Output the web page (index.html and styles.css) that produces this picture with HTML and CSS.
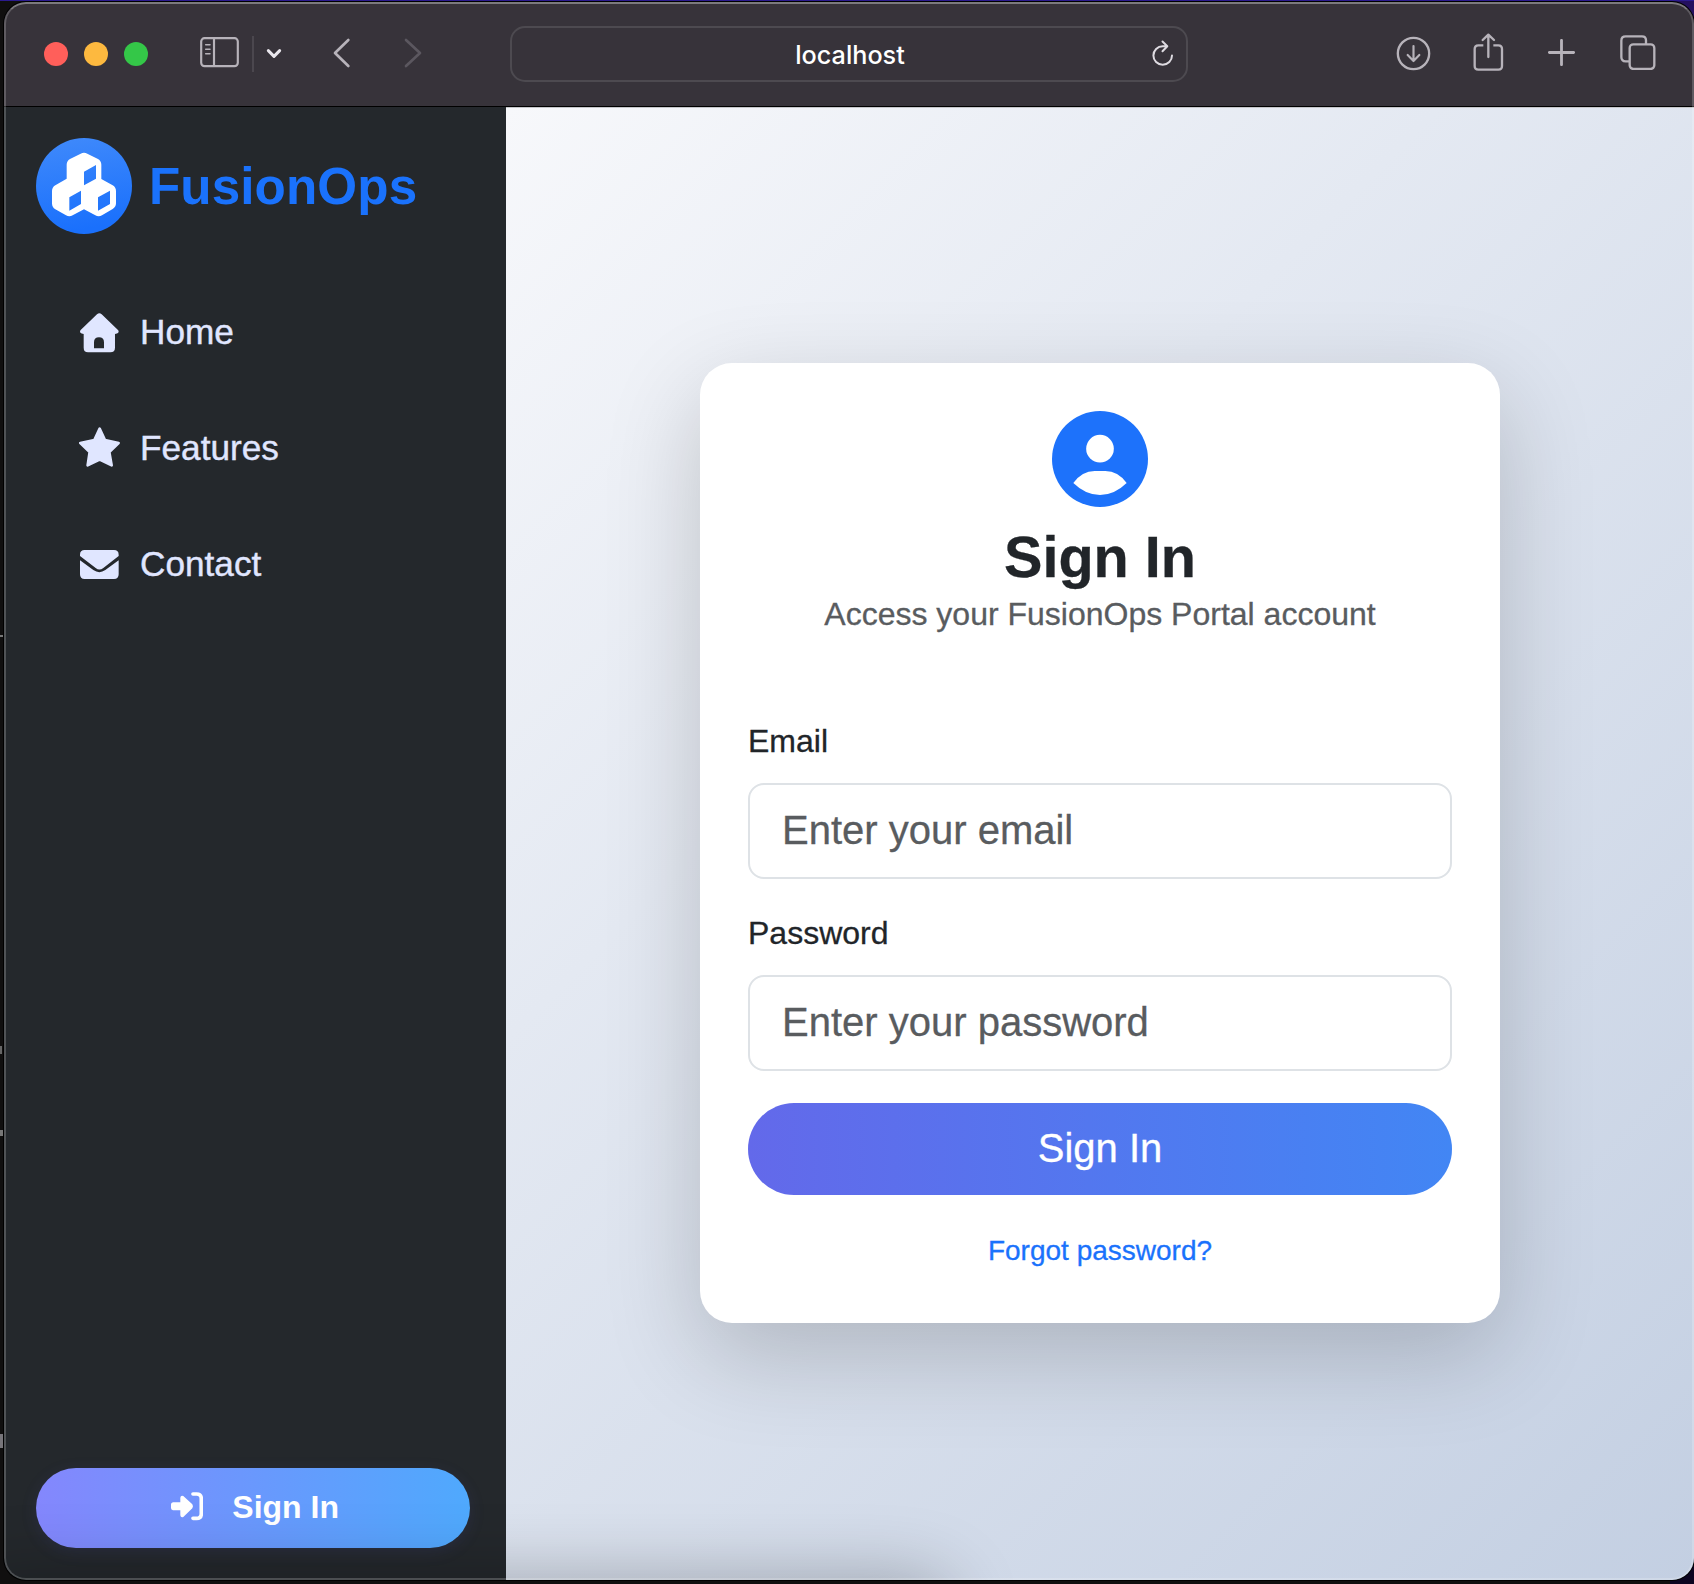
FILE: index.html
```html
<!DOCTYPE html>
<html lang="en">
<head>
<meta charset="utf-8">
<title>FusionOps Portal</title>
<link rel="stylesheet" href="styles.css">
</head>
<body>
<div class="window">
  <header class="toolbar">
    <div class="lights"><i class="light red"></i><i class="light yellow"></i><i class="light green"></i></div>
    <svg class="tb-sidebar" viewBox="600 113 117 91" width="39" height="30.3" fill="none" stroke="#b7b3ba" stroke-width="6.5"><rect x="603.5" y="116.5" width="110" height="84" rx="10"/><path d="M642 116V201"/><path stroke-width="4.5" stroke-linecap="round" d="M617 136H630M617 150H630M617 163H630"/></svg>
    <span class="tb-sep"></span>
    <svg class="tb-chev" viewBox="798 144 48 33" width="16" height="11" fill="none" stroke="#e9e6ec" stroke-width="9" stroke-linecap="round" stroke-linejoin="round"><path d="M805 152L822 169L839 152"/></svg>
    <svg class="tb-back" viewBox="998 114 54 90" width="18" height="30" fill="none" stroke="#b7b3ba" stroke-width="8" stroke-linecap="round" stroke-linejoin="round"><path d="M1044 120L1004 159L1044 198"/></svg>
    <svg class="tb-fwd" viewBox="1212 114 54 90" width="18" height="30" fill="none" stroke="#5b575f" stroke-width="8" stroke-linecap="round" stroke-linejoin="round"><path d="M1218 120L1260 159L1218 198"/></svg>
    <div class="address"><span>localhost</span>
      <svg class="reload" viewBox="0 0 24 28" width="24" height="28" fill="none" stroke="#dedbe1" stroke-width="2" stroke-linecap="round" stroke-linejoin="round"><path d="M21 15.5A9.3 9.3 0 1 1 11.7 6.2H16M11.5 1.5L16.3 6.2L11.5 11.2"/></svg>
    </div>
    <div class="tb-actions">
      <svg viewBox="139 107 105 105" width="35" height="35" fill="none" stroke="#b7b3ba" stroke-width="7" stroke-linecap="round" stroke-linejoin="round"><circle cx="191.500" cy="159.500" r="47"/><path stroke-width="6.5" d="M191.500 137V181M174 164L191.500 182L209 164"/></svg>
      <svg class="tb-share" viewBox="370 97 93 114" width="31" height="38" fill="none" stroke="#b7b3ba" stroke-width="7" stroke-linecap="round" stroke-linejoin="round"><path stroke-linecap="butt" d="M401 134H386Q375 134 375 145V196Q375 207 386 207H446Q457 207 457 196V145Q457 134 446 134H431"/><path d="M416 169V102M399 118L416 102L433 118"/></svg>
      <svg class="tb-plus" viewBox="594 117 81 81" width="27" height="27" fill="none" stroke="#b7b3ba" stroke-width="8.5" stroke-linecap="round"><path d="M634.500 121V194M598 157.500H671"/></svg>
      <svg class="tb-tabs" viewBox="809 105 108 106" width="36" height="35.300" fill="none" stroke="#b7b3ba" stroke-width="7"><rect x="838" y="133" width="74" height="74" rx="11"/><path d="M838 184H826Q813 184 813 171V122Q813 109 826 109H875Q887 109 887 121V132"/></svg>
    </div>
  </header>
  <div class="page">
    <aside class="sidebar">
      <div class="brand">
        <svg viewBox="18 24 288 288" width="96" height="96"><defs><linearGradient id="brand" x1="0" y1="0" x2="0.150" y2="1"><stop offset="0" stop-color="#408afb"/><stop offset="1" stop-color="#1a70fc"/></linearGradient></defs><circle cx="162" cy="168" r="144" fill="url(#brand)"/><path fill="#fff" fill-rule="evenodd" d="M152 71Q162 66 172 71L204 87Q214 93 214 104V147L248 166Q258 172 258 183V220Q258 231 248 237L216 256Q206 262 196 256L162 238L128 256Q118 262 108 256L76 238Q66 232 66 220V183Q66 172 76 166L110 146V104Q110 93 120 87ZM162 125V166L198 146V105ZM118 202V242L153 222V182ZM204 202V242L240 222V182Z"/></svg>
        <span>FusionOps</span>
      </div>
      <nav class="nav">
        <a><svg class="house" viewBox="150 68 117 118" width="39" height="39.300" fill="#e0e6ff"><path fill-rule="evenodd" d="M201 72Q208 66 215 72L264 119Q268 124 264 128Q262 130 255 131V172Q255 186 241 186H174Q161 186 161 172V131Q154 130 152 128Q148 124 152 119ZM192 174H222V156Q222 141 207 141Q192 141 192 156Z"/></svg>Home</a>
        <a><svg class="star" viewBox="147 410 124 120" width="41.300" height="40" fill="#e0e6ff" stroke="#e0e6ff" stroke-width="8" stroke-linejoin="round"><path d="M209 415L225 449L266 458L238 485L245 525L209 508L173 525L179 485L151 458L193 449Z"/></svg>Features</a>
        <a><svg viewBox="150 780 117 87" width="39" height="29" fill="#e0e6ff"><path d="M150 798V794Q150 780 164 780H252Q266 780 266 794V798L220 834Q208 843 197 834ZM150 811L190 840Q208 853 226 840L266 811V853Q266 867 252 867H164Q150 867 150 853Z"/></svg>Contact</a>
      </nav>
      <button class="side-signin"><svg viewBox="513 215 97 86" width="32.300" height="28.700"><path fill="#fff" d="M519 246H541V232Q542 224 550 227L577 252Q581 258 577 264L550 290Q542 293 541 285V270H519Q513 269 513 263V252Q513 247 519 246Z"/><path fill="none" stroke="#fff" stroke-width="11" stroke-linecap="round" d="M579 221H590Q604 221 604 235V280Q604 294 590 294H579"/></svg>Sign In</button>
    </aside>
    <main class="main">
      <form class="card">
        <svg class="avatar" viewBox="216 93 288 288" width="96" height="96"><circle cx="360" cy="237" r="144" fill="#1d72fb"/><circle cx="360" cy="206" r="41.500" fill="#fff"/><path fill="#fff" d="M280 309Q306 273 344 273H376Q414 273 440 309Q403 345 360 345Q317 345 280 309Z"/></svg>
        <h1>Sign In</h1>
        <p class="subtitle">Access your FusionOps Portal account</p>
        <label for="email">Email</label>
        <input id="email" type="email" placeholder="Enter your email">
        <label for="password">Password</label>
        <input id="password" type="password" placeholder="Enter your password">
        <button type="button" class="submit">Sign In</button>
        <a class="forgot">Forgot password?</a>
      </form>
    </main>
  </div>
</div>
</body>
</html>
```
FILE: styles.css
```css
* { box-sizing: border-box; }
html, body { height: 100%; }
body {
  margin: 0;
  padding: 2px 0 4px 4px;
  overflow: hidden;
  font-family: Arial, "Liberation Sans", sans-serif;
  background:
    linear-gradient(#2b1b8e, #2b1b8e) 0 0 / 100% 1px no-repeat,
    linear-gradient(#77757a, #77757a) 0 1434px / 3px 14px no-repeat,
    linear-gradient(#666, #666) 0 1046px / 2px 8px no-repeat,
    linear-gradient(#777, #777) 0 1130px / 3px 6px no-repeat,
    linear-gradient(#777, #777) 0 635px / 3px 2px no-repeat,
    linear-gradient(#24105f, #24105f) 100% 0 / 24px 24px no-repeat,
    linear-gradient(#0c0420, #0c0420) 100% 100% / 24px 24px no-repeat,
    #100f0f;
}
svg { display: block; flex: none; }
.window {
  position: relative;
  height: 1578px;
  border-radius: 22px;
  overflow: hidden;
  background: #24282c;
  box-shadow: 0 0 0 1px #000;
  display: flex;
  flex-direction: column;
}
.window::after {
  content: "";
  position: absolute;
  inset: 0;
  border: 2px solid rgba(255, 255, 255, .2);
  border-top-color: rgba(255, 255, 255, .35);
  border-radius: 22px;
  pointer-events: none;
}
.toolbar {
  flex: none;
  height: 105px;
  padding: 0 38px 0 40px;
  display: flex;
  align-items: center;
  background: #37333a;
  border-bottom: 1px solid #000;
}
.toolbar > * { margin-top: -1px; }
.lights { display: flex; gap: 16px; }
.light { width: 24px; height: 24px; border-radius: 50%; }
.red { background: #ff5f5a; }
.yellow { background: #fdb93f; }
.green { background: #34c748; }
.toolbar > .tb-sidebar, .toolbar > .tb-back, .toolbar > .tb-fwd { margin-top: -3px; }
.tb-sidebar { margin-left: 52px; }
.tb-sep { width: 2px; height: 36px; margin-left: 13px; background: #4b474e; }
.tb-chev { margin-left: 12px; }
.tb-back { margin-left: 51px; }
.tb-fwd { margin-left: 53px; }
.address {
  position: relative;
  width: 678px;
  height: 56px;
  margin-left: 88px;
  padding: 3px 0 0 2px;
  border: 2px solid #4d4a50;
  border-radius: 15px;
  display: flex;
  align-items: center;
  justify-content: center;
  font: 500 25.2px Inter, sans-serif;
  color: #fff;
}
.reload { position: absolute; right: 11px; top: 12px; }
.tb-actions { display: flex; align-items: center; margin-left: auto; }
.tb-share { margin: -4px 0 0 42px; }
.tb-plus { margin: -2px 0 0 44px; }
.tb-tabs { margin: -2px 0 0 45px; }
.page { position: relative; flex: 1; display: flex; }
.page::after {
  content: "";
  position: absolute;
  left: -40px;
  top: 100%;
  width: 985px;
  height: 80px;
  border-radius: 32px;
  box-shadow: 0 0 72px rgba(0, 0, 0, .28);
}
.sidebar {
  width: 502px;
  padding: 31px 36px 32px 32px;
  display: flex;
  flex-direction: column;
}
.brand {
  display: flex;
  align-items: center;
  gap: 17px;
  font-size: 51.2px;
  font-weight: 700;
  letter-spacing: .1px;
  color: #1a72fc;
}
.nav { padding: 40px 0 0 44px; }
.nav a {
  height: 116px;
  display: flex;
  align-items: center;
  gap: 21px;
  font-size: 35.2px;
  color: #e0e6ff;
  -webkit-text-stroke: .4px;
}
.house { margin-top: 2px; }
.star { margin: -2px -1.3px 0 -1px; }
.side-signin {
  height: 80px;
  margin-top: auto;
  padding: 0 0 2px 4px;
  border: 0;
  border-radius: 40px;
  display: flex;
  align-items: center;
  justify-content: center;
  gap: 29px;
  font: 700 32px "Liberation Sans", sans-serif;
  color: #fff;
  background: linear-gradient(90deg, #8487fd, #4fa9fd);
  box-shadow: 0 4px 16px rgba(80, 80, 180, .15);
}
.side-signin svg { margin-top: -1px; }
.main {
  flex: 1;
  padding-bottom: 2px;
  border-top: 1px solid #c5c6ca;
  display: flex;
  align-items: center;
  justify-content: center;
  background: linear-gradient(135deg, #f7f8fb, #e4e9f2 35%, #c3cfe2);
}
.card {
  width: 800px;
  height: 960px;
  margin-top: -1px;
  padding: 48px;
  border-radius: 32px;
  display: flex;
  flex-direction: column;
  background: #fff;
  color: #212529;
  box-shadow: 0 32px 96px rgba(0, 0, 0, .19);
  font-size: 32px;
  line-height: 48px;
  -webkit-text-stroke: .3px;
}
.avatar { margin: 0 auto 16px; }
h1 { margin: 0; font-size: 57.6px; line-height: 69px; text-align: center; }
.subtitle { margin: -2px 0 79px; text-align: center; color: #595c5f; }
label { margin-bottom: 2px; }
input {
  height: 96px;
  margin: 16px 0 30px;
  padding: 0 32px;
  border: 2px solid #dee2e6;
  border-radius: 16px;
  background: #fff;
  font: 40px "Liberation Sans", sans-serif;
}
input::placeholder { color: #595c5f; opacity: 1; -webkit-text-stroke: .3px; }
.submit {
  height: 92px;
  margin-top: 2px;
  border: 0;
  border-radius: 46px;
  font: 40px "Liberation Sans", sans-serif;
  color: #fff;
  background: linear-gradient(90deg, #6369ea, #4286f4);
}
.forgot { margin-top: 32px; text-align: center; font-size: 28px; color: #1a72fc; }
```
